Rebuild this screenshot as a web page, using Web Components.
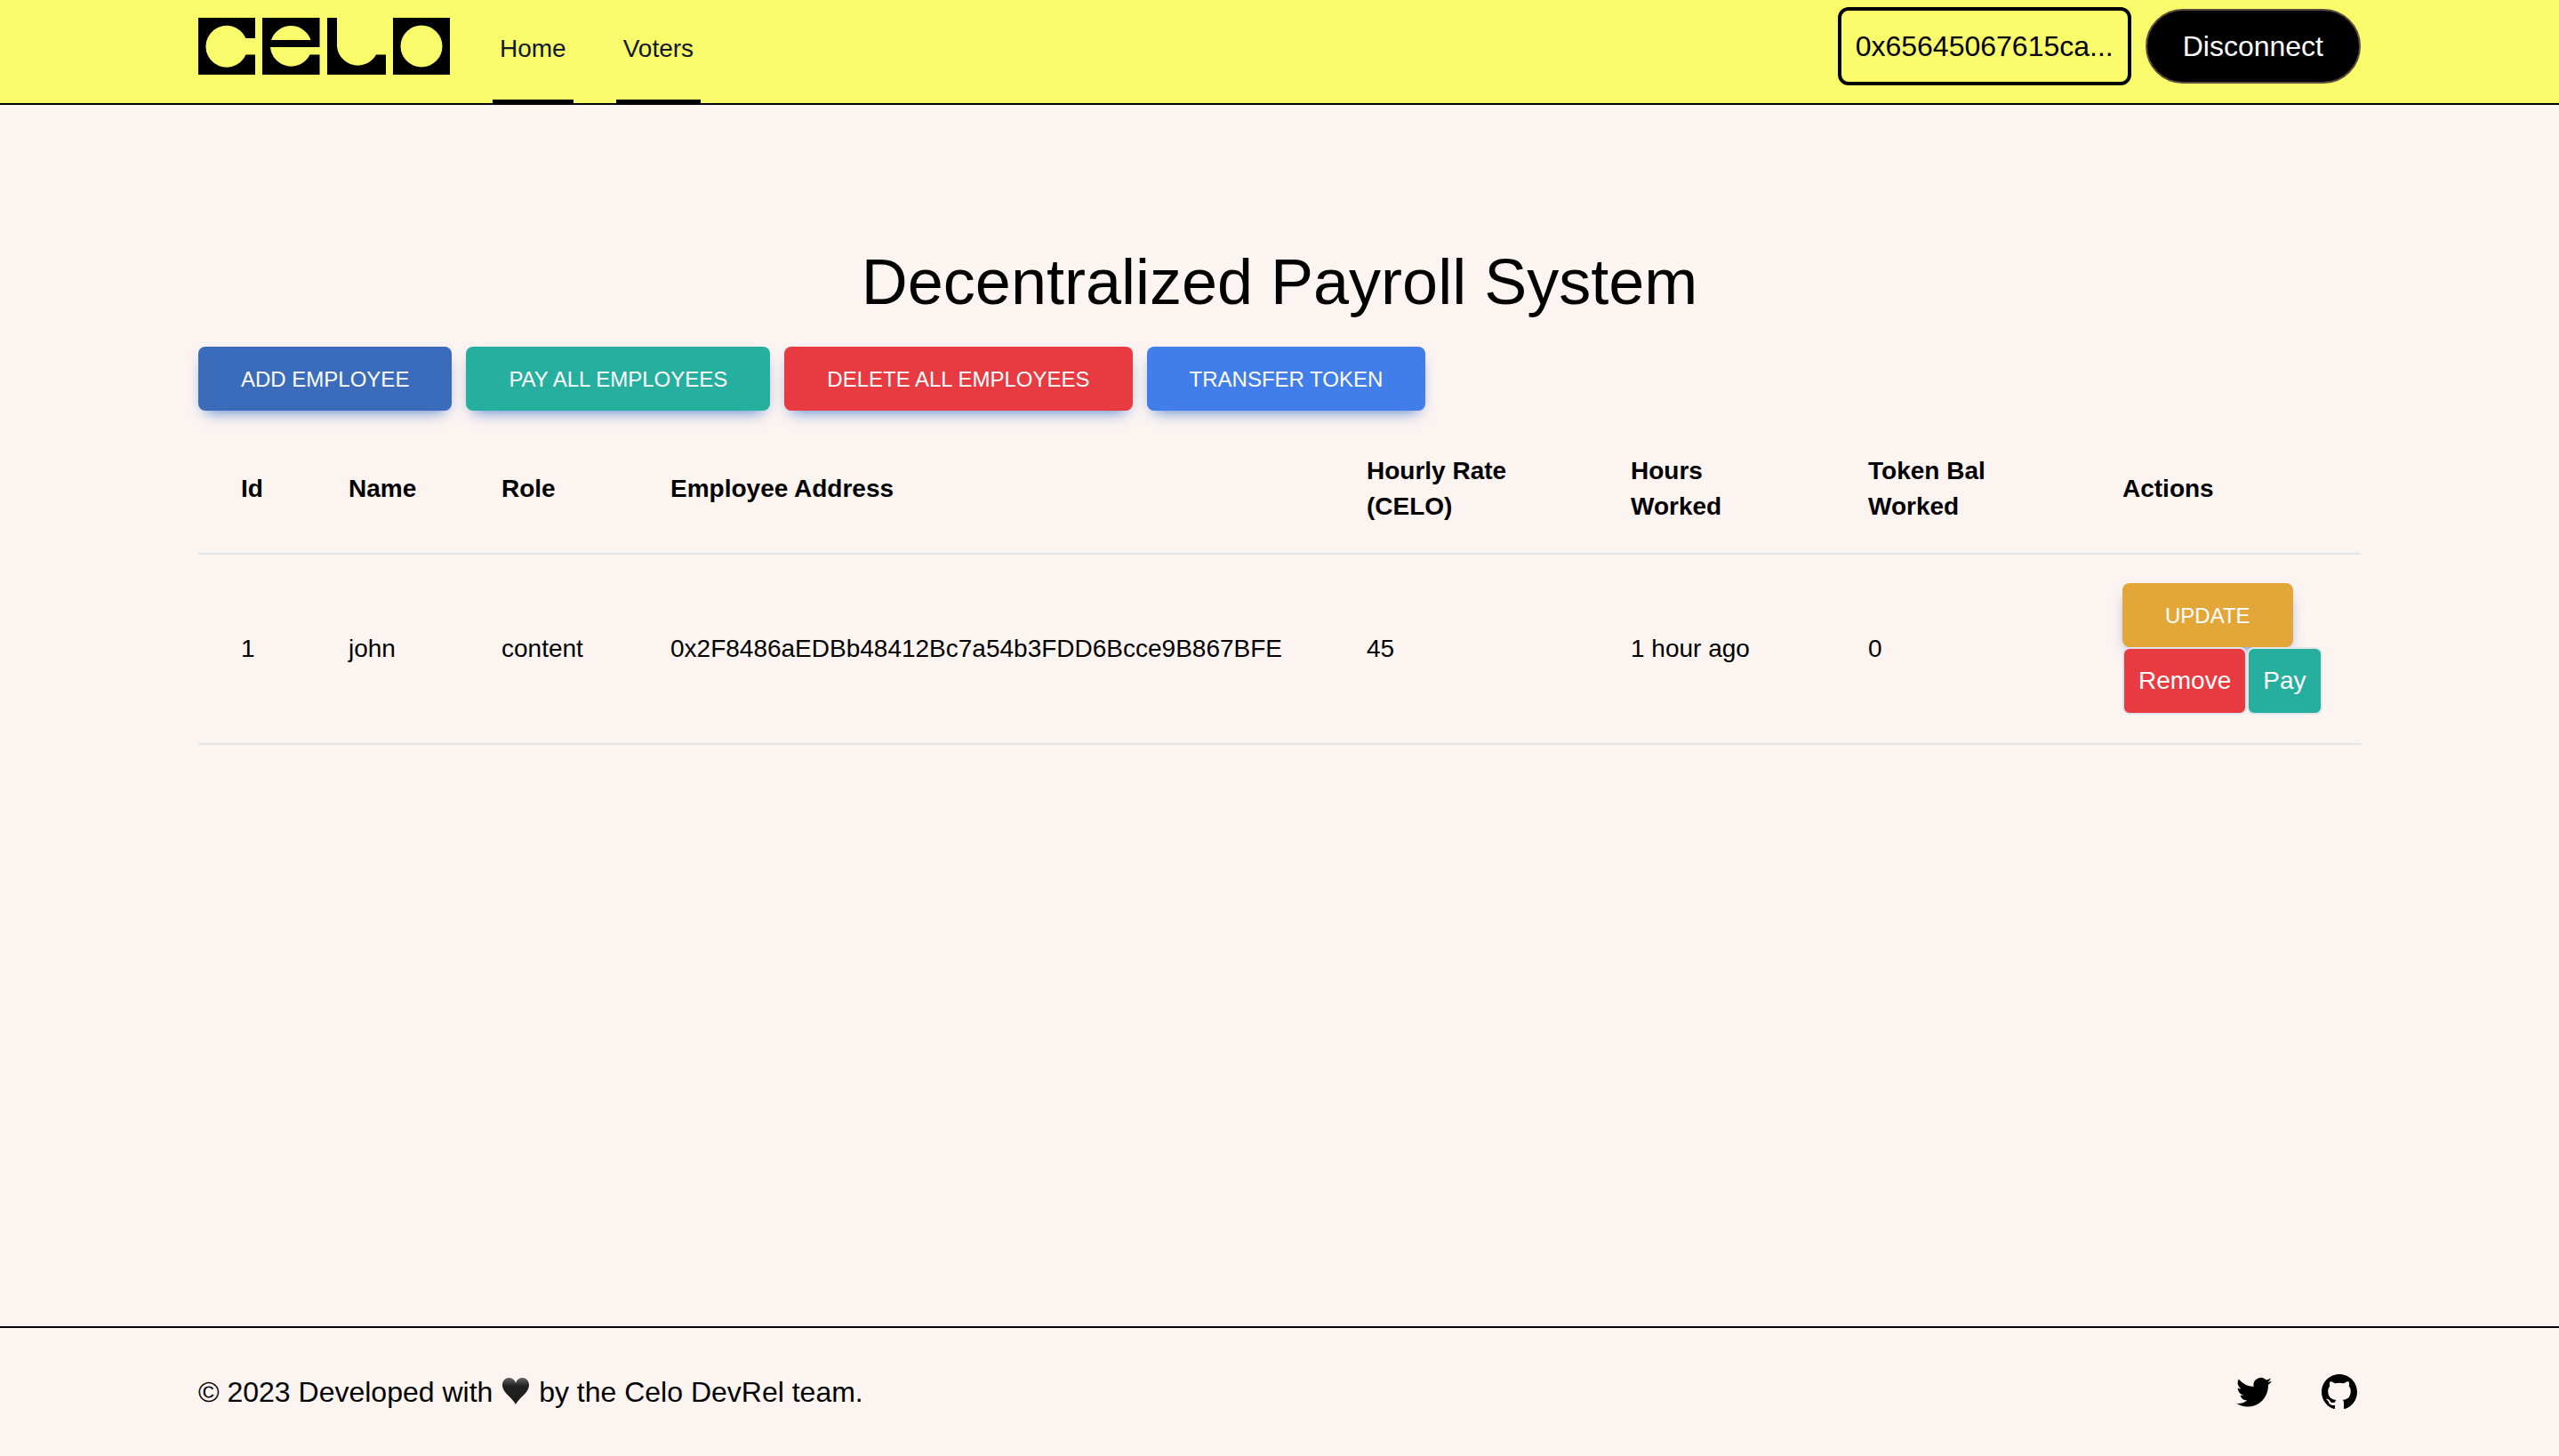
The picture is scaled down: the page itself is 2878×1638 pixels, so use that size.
<!DOCTYPE html>
<html lang="en">
<head>
<meta charset="utf-8">
<meta name="viewport" content="width=device-width, initial-scale=1">
<title>Decentralized Payroll System</title>
<style>
  :root {
    --sand: #fcf4f1;
    --yellow: #f9fb6a;
    --ink: #000;
    --line: #e1e5ea;
    --blue: #3b6cbb;
    --teal: #26af9e;
    --red: #e83a41;
    --sky: #417eea;
    --amber: #e3a639;
  }
  body {
    margin: 0;
    background: var(--sand);
    color: var(--ink);
    font: 28px/40px "Liberation Sans", Arial, sans-serif;
  }
</style>
</head>
<body>
<payroll-app></payroll-app>

<template id="t-app">
  <style>
    :host { display: flex; flex-direction: column; min-height: 100vh; }
    main { flex: 1; }
  </style>
  <site-header></site-header>
  <main>
    <page-container>
      <payroll-page></payroll-page>
    </page-container>
  </main>
  <site-footer></site-footer>
</template>

<template id="t-container">
  <style>
    :host { display: block; box-sizing: border-box; width: 100%; max-width: 2560px; margin: 0 auto; padding: 0 64px; }
  </style>
  <slot></slot>
</template>

<template id="t-header">
  <style>
    :host { display: block; background: var(--yellow); border-bottom: 2px solid var(--ink); }
    .bar { display: flex; justify-content: space-between; height: 116px; }
    nav { display: flex; gap: 48px; }
    celo-logo { margin-top: 20px; }
    .wallet { display: flex; align-items: center; gap: 16px; height: 104px; font-size: 32px; }
    .address { padding: 20px 16px; border: 4px solid var(--ink); border-radius: 12px; background: none; font: inherit; line-height: 40px; color: inherit; }
    .disconnect { padding: 20px 40px; border: 2px solid #5c4c40; border-radius: 42px; background: var(--ink); color: #fff; font: inherit; line-height: 40px; }
  </style>
  <page-container>
    <div class="bar">
      <nav>
        <celo-logo></celo-logo>
        <nav-link href="#home">Home</nav-link>
        <nav-link href="#voters">Voters</nav-link>
      </nav>
      <div class="wallet">
        <button class="address" type="button">0x65645067615ca...</button>
        <button class="disconnect" type="button">Disconnect</button>
      </div>
    </div>
  </page-container>
</template>

<template id="t-logo">
  <style>
    :host { display: block; width: 283px; height: 64px; }
    svg { display: block; }
  </style>
  <svg width="283" height="64" viewBox="0 0 283 64" role="img" aria-label="Celo">
    <path d="M0 0H64V23H53.500A23.500 23.500 0 1 0 53.500 41.500H64V64H0Z"/>
    <path fill-rule="evenodd" d="M72 0H136.500V33H81A23.500 23.500 0 0 0 125.500 41.500H136.500V64H72ZM82 25H126.500A23.500 23.500 0 0 0 82 25Z"/>
    <path d="M145 0H156V32A23.500 23.500 0 0 0 200 41.500H211V64H145Z"/>
    <path fill-rule="evenodd" d="M219 0H283V64H219ZM227.500 32A23.500 23.500 0 1 0 274.500 32A23.500 23.500 0 1 0 227.500 32Z"/>
  </svg>
</template>

<template id="t-nav-link">
  <style>
    :host { display: flex; }
    a { display: flex; align-items: center; box-sizing: border-box; padding: 0 8px 2px; border-bottom: 4px solid var(--ink); color: #111827; text-decoration: none; }
  </style>
  <a><slot></slot></a>
</template>

<template id="t-page">
  <style>
    :host { display: block; padding-top: 160px; }
    h1 { margin: 0; font-size: 72px; line-height: 78px; font-weight: 400; text-align: center; }
    .actions { display: flex; flex-wrap: wrap; gap: 16px; margin: 34px 0 16px; }
  </style>
  <h1>Decentralized Payroll System</h1>
  <div class="actions">
    <action-button tone="blue">ADD EMPLOYEE</action-button>
    <action-button tone="teal">PAY ALL EMPLOYEES</action-button>
    <action-button tone="red">DELETE ALL EMPLOYEES</action-button>
    <action-button tone="sky">TRANSFER TOKEN</action-button>
  </div>
  <employee-table></employee-table>
</template>

<template id="t-button">
  <style>
    :host { display: block; }
    button { display: block; padding: 21px 48px 19px; border: 0; border-radius: 8px; background: var(--blue); color: #fff; font: inherit; font-size: 24px; line-height: 32px; box-shadow: 0 8px 18px -8px #3b71ca; }
    :host([tone="teal"]) button { background: var(--teal); }
    :host([tone="red"]) button { background: var(--red); }
    :host([tone="sky"]) button { background: var(--sky); }
    :host([tone="amber"]) button { background: var(--amber); }
    :host([compact]) button { padding: 16px; border: 2px solid var(--line); font-size: 28px; line-height: 40px; box-shadow: none; }
  </style>
  <button type="button"><slot></slot></button>
</template>

<template id="t-table">
  <style>
    :host { display: block; }
    table { width: 100%; table-layout: fixed; border-collapse: separate; border-spacing: 0; text-align: left; }
    th, td { padding: 32px 48px; border-bottom: 2px solid var(--line); vertical-align: middle; }
    td, tbody th { font-weight: 400; white-space: nowrap; }
    tbody th { font-weight: 500; }
    .id { width: 25px; }
    .name { width: 76px; }
    .role { width: 94px; }
    .address { width: 687px; }
    .rate { width: 201px; }
    .hours { width: 171px; }
    .token { width: 190px; }
    .tools { display: flex; flex-direction: column; align-items: flex-start; }
    .pair { display: flex; }
  </style>
  <table>
    <thead>
      <tr>
        <th class="id" scope="col">Id</th>
        <th class="name" scope="col">Name</th>
        <th class="role" scope="col">Role</th>
        <th class="address" scope="col">Employee Address</th>
        <th class="rate" scope="col">Hourly Rate (CELO)</th>
        <th class="hours" scope="col">Hours<br>Worked</th>
        <th class="token" scope="col">Token Bal Worked</th>
        <th scope="col">Actions</th>
      </tr>
    </thead>
    <tbody>
      <tr>
        <th scope="row">1</th>
        <td>john</td>
        <td>content</td>
        <td>0x2F8486aEDBb48412Bc7a54b3FDD6Bcce9B867BFE</td>
        <td>45</td>
        <td>1 hour ago</td>
        <td>0</td>
        <td>
          <div class="tools">
            <action-button tone="amber">UPDATE</action-button>
            <div class="pair">
              <action-button tone="red" compact>Remove</action-button>
              <action-button tone="teal" compact>Pay</action-button>
            </div>
          </div>
        </td>
      </tr>
    </tbody>
  </table>
</template>

<template id="t-footer">
  <style>
    :host { display: block; border-top: 2px solid var(--ink); }
    .row { display: flex; align-items: center; justify-content: space-between; padding: 48px 0; }
    p { margin: 0; font-size: 32px; line-height: 48px; }
    .heart { width: 34px; height: 32px; vertical-align: -4px; }
    .links { display: flex; gap: 48px; }
    a { display: block; color: inherit; }
    a svg { display: block; width: 48px; height: 48px; fill: currentColor; }
  </style>
  <page-container>
    <div class="row">
      <p>© 2023 Developed with <svg class="heart" viewBox="0 0 34 32" role="img" aria-label="black heart"><defs><linearGradient id="g" x1="0" y1="0" x2="0" y2="1"><stop offset="0" stop-color="#666"/><stop offset=".3" stop-color="#222"/><stop offset="1" stop-color="#1c1c1c"/></linearGradient></defs><path fill="url(#g)" d="M17 31C14 24 2 18 2 9.500C2 4.500 5 1 9.500 1C13 1 16 3.500 17 7C18 3.500 21 1 24.500 1C29 1 32 4.500 32 9.500C32 18 20 24 17 31Z"/></svg> by the Celo DevRel team.</p>
      <div class="links">
        <a href="#twitter" aria-label="Twitter"><svg viewBox="0 0 24 24"><path d="M8.290 20.251c7.547 0 11.675-6.253 11.675-11.675 0-.178 0-.355-.012-.53A8.348 8.348 0 0022 5.920a8.190 8.190 0 01-2.357.646 4.118 4.118 0 001.804-2.270 8.224 8.224 0 01-2.605.996 4.107 4.107 0 00-6.993 3.743 11.650 11.650 0 01-8.457-4.287 4.106 4.106 0 001.270 5.477A4.072 4.072 0 012.800 9.713v.052a4.105 4.105 0 003.292 4.022 4.095 4.095 0 01-1.853.070 4.108 4.108 0 003.834 2.850A8.233 8.233 0 012 18.407a11.616 11.616 0 006.290 1.840"/></svg></a>
        <a href="#github" aria-label="GitHub"><svg viewBox="0 0 24 24"><path d="M12 2C6.477 2 2 6.484 2 12.017c0 4.425 2.865 8.180 6.839 9.504.500.092.682-.217.682-.483 0-.237-.008-.868-.013-1.703-2.782.605-3.369-1.343-3.369-1.343-.454-1.158-1.110-1.466-1.110-1.466-.908-.620.069-.608.069-.608 1.003.070 1.531 1.032 1.531 1.032.892 1.530 2.341 1.088 2.910.832.092-.647.350-1.088.636-1.338-2.220-.253-4.555-1.113-4.555-4.951 0-1.093.390-1.988 1.029-2.688-.103-.253-.446-1.272.098-2.650 0 0 .840-.270 2.750 1.026A9.564 9.564 0 0112 6.844c.850.004 1.705.115 2.504.337 1.909-1.296 2.747-1.027 2.747-1.027.546 1.379.202 2.398.100 2.651.640.700 1.028 1.595 1.028 2.688 0 3.848-2.339 4.695-4.566 4.943.359.309.678.920.678 1.855 0 1.338-.012 2.419-.012 2.747 0 .268.180.580.688.482A10.019 10.019 0 0022 12.017C22 6.484 17.522 2 12 2z"/></svg></a>
      </div>
    </div>
  </page-container>
</template>

<script>
  class TemplateElement extends HTMLElement {
    constructor() {
      super();
      const template = document.getElementById(this.constructor.template);
      this.attachShadow({ mode: "open" }).append(template.content.cloneNode(true));
    }
  }

  const define = (name, template, Base = TemplateElement) =>
    customElements.define(name, class extends Base { static template = template; });

  class LinkElement extends TemplateElement {
    connectedCallback() {
      this.shadowRoot.querySelector("a").href = this.getAttribute("href");
    }
  }

  define("page-container", "t-container");
  define("celo-logo", "t-logo");
  define("nav-link", "t-nav-link", LinkElement);
  define("action-button", "t-button");
  define("employee-table", "t-table");
  define("site-header", "t-header");
  define("site-footer", "t-footer");
  define("payroll-page", "t-page");
  define("payroll-app", "t-app");
</script>
</body>
</html>
